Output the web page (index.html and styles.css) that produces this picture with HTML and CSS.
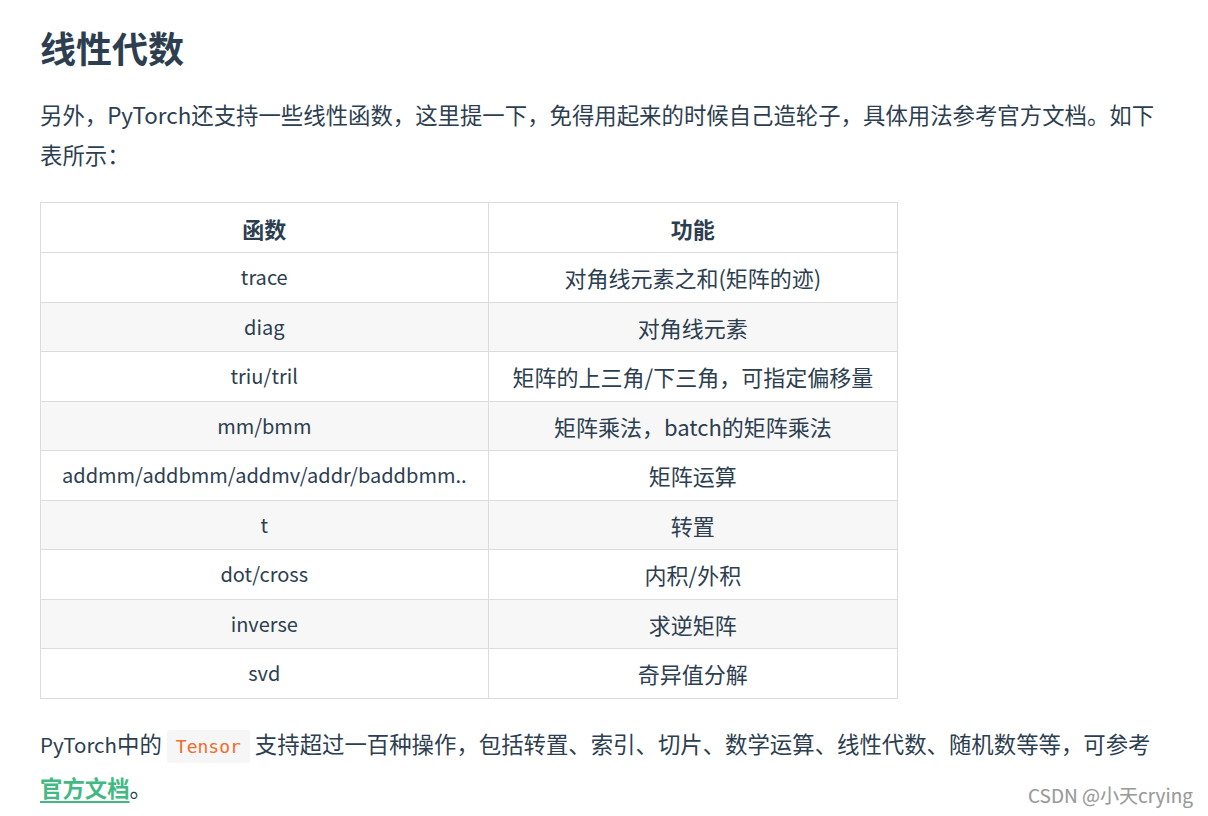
FILE: index.html
```html
<!DOCTYPE html>
<html lang="zh">
<head>
<meta charset="utf-8">
<link rel="stylesheet" href="styles.css">
</head>
<body>
<div class="content">
  <h2 class="title">线性代数</h2>
  <p class="para">另外，PyTorch还支持一些线性函数，这里提一下，免得用起来的时候自己造轮子，具体用法参考官方文档。如下表所示：</p>
  <table class="tbl">
    <thead>
      <tr><th class="c1">函数</th><th class="c2">功能</th></tr>
    </thead>
    <tbody>
      <tr><td class="fn">trace</td><td class="c2">对角线元素之和(矩阵的迹)</td></tr>
      <tr><td class="fn">diag</td><td class="c2">对角线元素</td></tr>
      <tr><td class="fn">triu/tril</td><td class="c2">矩阵的上三角/下三角，可指定偏移量</td></tr>
      <tr><td class="fn">mm/bmm</td><td class="c2">矩阵乘法，batch的矩阵乘法</td></tr>
      <tr><td class="fn">addmm/addbmm/addmv/addr/baddbmm..</td><td class="c2">矩阵运算</td></tr>
      <tr><td class="fn">t</td><td class="c2">转置</td></tr>
      <tr><td class="fn">dot/cross</td><td class="c2">内积/外积</td></tr>
      <tr><td class="fn">inverse</td><td class="c2">求逆矩阵</td></tr>
      <tr><td class="fn">svd</td><td class="c2">奇异值分解</td></tr>
    </tbody>
  </table>
  <p class="para para2"><span class="lat">PyTorch</span>中的 <code class="code">Tensor</code> 支持超过一百种操作，包括转置、索引、切片、数学运算、线性代数、随机数等等，可参考<a class="link" href="#">官方文档</a>。</p>
</div>
<div class="watermark">CSDN @小天crying</div>
</body>
</html>
```

FILE: styles.css
```css
html, body {
  margin: 0;
  padding: 0;
  background: #ffffff;
}
body {
  width: 1208px;
  height: 816px;
  overflow: hidden;
  position: relative;
  font-family: "Noto Sans CJK SC", "Noto Sans", sans-serif;
  color: #2c3e50;
}
.content {
  width: 1122px;
  padding: 22px 0 0 40px;
}
.title {
  margin: 0;
  font-size: 36px;
  line-height: 50px;
  font-weight: 700;
  color: #2c3e50;
}
.para {
  margin: 22px 0 0 0;
  font-size: 22.4px;
  line-height: 40px;
  color: #2c3e50;
}
.lat {
  font-size: 20.5px;
}
.tbl {
  margin-top: 28px;
  border-collapse: collapse;
  font-size: 22px;
  color: #2c3e50;
}
.tbl th, .tbl td {
  border: 1px solid #dcdcdc;
  height: 48.5px;
  padding: 0 21px;
  text-align: center;
  line-height: 30px;
}
.tbl .c2 {
  padding: 0 24px;
}
.tbl th {
  font-weight: 700;
  height: 49px;
}
.tbl td.fn {
  font-size: 20px;
}
.tbl tbody tr:nth-child(even) td {
  background: #f7f7f7;
}
.para2 {
  margin-top: 24px;
}
.code {
  font-family: "DejaVu Sans Mono", "Liberation Mono", monospace;
  font-size: 18px;
  color: #f26b2a;
  background: #f6f6f6;
  border-radius: 3px;
  padding: 6px 9px;
}
.link {
  color: #42b983;
  font-weight: 700;
  text-decoration: underline;
  text-decoration-thickness: 2px;
  text-underline-offset: 4px;
}
.watermark {
  position: absolute;
  right: 15px;
  bottom: 8px;
  font-size: 19px;
  color: #9a9a9a;
  font-family: "Noto Sans CJK SC", "Noto Sans", sans-serif;
  text-shadow: 0 0 1px #e0e0e0;
}
```
